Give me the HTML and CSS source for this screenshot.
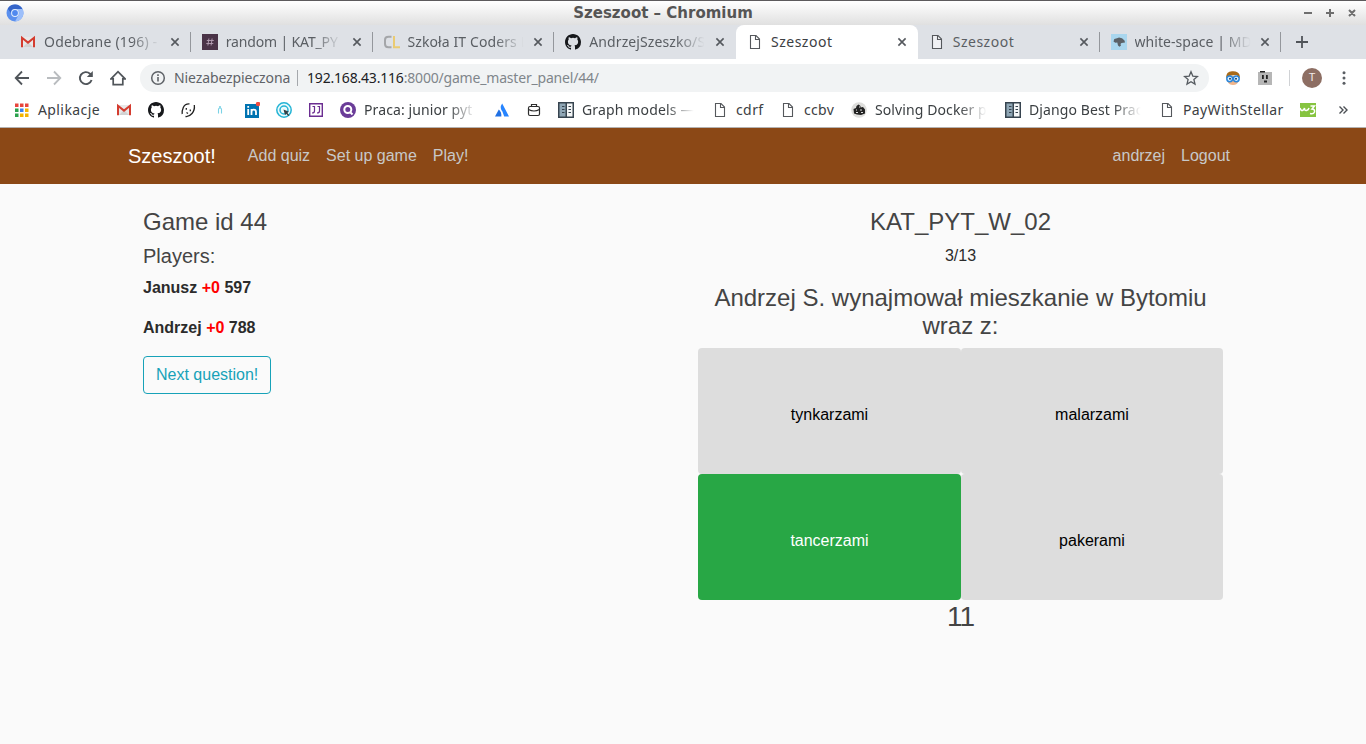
FILE: index.html
```html
<!DOCTYPE html>
<html lang="pl">
<head>
<meta charset="utf-8">
<title>Szeszoot</title>
<link rel="stylesheet" href="styles.css">
</head>
<body>
<svg class="defs" width="0" height="0">
  <symbol id="gmail" viewBox="0 0 16 16"><path d="M2 3h12v10H2z" fill="#e8e8e8"/><path d="M3 13l5-5 5 5z" fill="#d2d2d2"/><path d="M2 13.2V3.8l6 4.8 6-4.8v9.4" fill="none" stroke="#d43c2f" stroke-width="2"/></symbol>
  <symbol id="github" viewBox="0 0 16 16"><path fill="#17191c" d="M8 0C3.58 0 0 3.58 0 8c0 3.54 2.29 6.53 5.47 7.59.4.07.55-.17.55-.38 0-.19-.01-.82-.01-1.49-2.01.37-2.53-.49-2.69-.94-.09-.23-.48-.94-.82-1.13-.28-.15-.68-.52-.01-.53.63-.01 1.08.58 1.23.82.72 1.21 1.87.87 2.33.66.07-.52.28-.87.51-1.07-1.78-.2-3.64-.89-3.64-3.95 0-.87.31-1.59.82-2.15-.08-.2-.36-1.02.08-2.12 0 0 .67-.21 2.2.82a7.6 7.6 0 0 1 4 0c1.53-1.04 2.2-.82 2.2-.82.44 1.1.16 1.92.08 2.12.51.56.82 1.27.82 2.15 0 3.07-1.87 3.75-3.65 3.95.29.25.54.73.54 1.48 0 1.07-.01 1.93-.01 2.2 0 .21.15.46.55.38A8.01 8.01 0 0 0 16 8c0-4.42-3.58-8-8-8z"/></symbol>
  <symbol id="page" viewBox="0 0 16 16"><path d="M3.500 1.500h5.500l3.500 3.500v9.500h-9z" fill="#fff" fill-opacity=".5" stroke="#55585c" stroke-width="1.100"/><path d="M8.500 1.600v3.900h4" fill="none" stroke="#55585c" stroke-width="1.100"/></symbol>
  <symbol id="close" viewBox="0 0 10 10"><path d="M1.400 1.400l7.200 7.200M8.600 1.400L1.400 8.600" stroke="#55595e" stroke-width="1.600"/></symbol>
  <symbol id="book" viewBox="0 0 16 16"><path d="M0 0h16v16H0z" fill="#37444f"/><path d="M1.500 1.500H7.500v13H1.500z" fill="#8fa6b5"/><path d="M9 1.500h5.500v13H9z" fill="#f4f6f7"/><path d="M4 4.500h2.500M4 7.500h2.500M4 10.500h2.500M10.500 4.500H13M10.500 7.500H13M10.500 10.500H13" stroke="#37444f" stroke-width="1.200"/></symbol>
</svg>

<header class="window">
  <div class="titlebar">
    <svg class="app-icon" width="18" height="18" viewBox="0 0 18 18"><circle cx="9" cy="9" r="8.500" fill="#5b90ee"/><path d="M1.700 4.700A8.500 8.500 0 0 1 16.500 5H9a4 4 0 0 0-4 4z" fill="#3565c9"/><path d="M16.500 5A8.500 8.500 0 0 1 9 17.500L12.600 11A4 4 0 0 0 9 5z" fill="#9dbffa"/><circle cx="9" cy="9" r="3.900" fill="#e4eefc"/><circle cx="9" cy="9" r="2.900" fill="#5089ef"/></svg>
    <span class="title">Szeszoot – Chromium</span>
    <svg class="win-buttons" width="56" height="12" viewBox="0 0 56 12"><path d="M2 6h8M24 6h8M28 2v8M47 3l6 6M53 3l-6 6" stroke="#6e6e6e" stroke-width="2"/></svg>
  </div>

  <div class="tabs">
    <div class="tab"><svg class="ico"><use href="#gmail"/></svg><span class="tab-label fade t-mail">Odebrane (196) - a</span><svg class="close"><use href="#close"/></svg></div>
    <div class="tab"><svg class="ico" viewBox="0 0 16 16"><path d="M0 0h16v16H0z" fill="#4b3448"/><path d="M6.900 4.500l-1 7M10.100 4.500l-1 7M4.800 6.500h7M4.300 9.500h7" stroke="#b7a0b4" stroke-width=".9"/></svg><span class="tab-label fade t-random">random | KAT_PY</span><svg class="close"><use href="#close"/></svg></div>
    <div class="tab"><svg class="ico" viewBox="0 0 16 16"><path d="M7.500 2.800H4.500Q1 2.800 1 6v4q0 3.200 3.500 3.200h3" fill="none" stroke="#a4a6a9" stroke-width="2"/><path d="M10 2v11.200h6" fill="none" stroke="#eacb72" stroke-width="2"/></svg><span class="tab-label fade t-szkola">Szkoła IT Coders L</span><svg class="close"><use href="#close"/></svg></div>
    <div class="tab before-active"><svg class="ico"><use href="#github"/></svg><span class="tab-label fade t-andrzej">AndrzejSzeszko/S</span><svg class="close"><use href="#close"/></svg></div>
    <div class="tab active"><svg class="ico"><use href="#page"/></svg><span class="tab-label t-szeszoot">Szeszoot</span><svg class="close"><use href="#close"/></svg></div>
    <div class="tab"><svg class="ico"><use href="#page"/></svg><span class="tab-label t-szeszoot">Szeszoot</span><svg class="close"><use href="#close"/></svg></div>
    <div class="tab"><svg class="ico" viewBox="0 0 16 16"><path d="M0 0h16v16H0z" fill="#a9d6ee"/><path d="M2.500 7.500l.8-2.500L6 4.300 8 3.500l3 .8 2.500 2.200.5 2-3.500.5-1 1 .5 1.500-1.500 1.300L7 11.500 6.300 8.500l-2 .3z" fill="#5b6167"/></svg><span class="tab-label fade t-white">white-space | MD</span><svg class="close"><use href="#close"/></svg></div>
    <svg class="new-tab" viewBox="0 0 12 12"><path d="M6 0v12M0 6h12" stroke="#505459" stroke-width="1.800"/></svg>
  </div>

  <div class="toolbar">
    <svg class="nav" viewBox="0 0 16 16"><path d="M15 8H2M8 1.500L1.700 8 8 14.500" fill="none" stroke="#50555a" stroke-width="1.800"/></svg>
    <svg class="nav" viewBox="0 0 16 16"><path d="M1 8h13M8 1.500L14.300 8 8 14.500" fill="none" stroke="#b9bcbf" stroke-width="1.800"/></svg>
    <svg class="nav" viewBox="0 0 16 16"><path d="M13.600 10A6 6 0 1 1 12 3.700L13.600 5.500" fill="none" stroke="#50555a" stroke-width="1.900"/><path d="M14.800 1v6H8.800z" fill="#50555a"/></svg>
    <svg class="nav" viewBox="0 0 16 16"><path d="M1 8.800L8 1.600l7 7.200h-2.200v5.800H3.200V8.800z" fill="none" stroke="#50555a" stroke-width="1.700"/></svg>
    <div class="omnibox">
      <svg class="info" viewBox="0 0 16 16"><circle cx="8" cy="8" r="6.300" fill="none" stroke="#5f6368" stroke-width="1.500"/><path d="M8 7v4.500M8 4.300v1.600" stroke="#5f6368" stroke-width="1.600"/></svg>
      <span class="insecure">Niezabezpieczona</span>
      <span class="url"><span class="host">192.168.43.116</span><span class="path">:8000/game_master_panel/44/</span></span>
      <svg class="star" viewBox="0 0 16 16"><path d="M8 1.800l1.800 4.300 4.700.4-3.600 3 1.100 4.600L8 11.700l-4 2.400 1.100-4.600-3.600-3 4.700-.4z" fill="none" stroke="#565b60" stroke-width="1.300"/></svg>
    </div>
    <svg class="ext" viewBox="0 0 16 16"><path d="M2.500 6h11v5q-1 4-5.500 4t-5.500-4z" fill="#f1b58a"/><path d="M1 8q0-6.500 6-6.800 6-.5 7.500 3.500L15 8l-3.500-3L6 5.500z" fill="#a96a17"/><circle cx="4.700" cy="8.800" r="2.900" fill="#dff2ff" stroke="#2b86da" stroke-width="1.500"/><circle cx="11.300" cy="8.800" r="2.900" fill="#dff2ff" stroke="#2b86da" stroke-width="1.500"/><circle cx="5" cy="8.800" r="1" fill="#17426b"/><circle cx="11" cy="8.800" r="1" fill="#17426b"/></svg>
    <svg class="ext" viewBox="0 0 16 16"><path d="M1 2h14v13H1z" fill="#b6b6b6"/><path d="M3 1h5v1.500H3z" fill="#222"/><path d="M5 5h1.800v4H5zM9 5h1.800v4H9zM7 10.500h3v2H7z" fill="#222"/></svg>
    <span class="divider"></span>
    <div class="avatar">T</div>
    <svg class="menu" viewBox="0 0 4 16"><g fill="#5a5e63"><circle cx="2" cy="2.800" r="1.500"/><circle cx="2" cy="8" r="1.500"/><circle cx="2" cy="13.200" r="1.500"/></g></svg>
  </div>

  <div class="bookmarks">
    <div class="bm"><svg class="ico" viewBox="0 0 16 16"><path d="M1 1.500h3.500V5H1zM6 1.500h3.500V5H6zM11 1.500h3.500V5H11z" fill="#e8453c"/><path d="M1 6.500h3.500V10H1zM1 11.500h3.500V15H1z" fill="#2ba24c"/><path d="M6 6.500h3.500V10H6z" fill="#3b82ee"/><path d="M11 6.500h3.500V10H11zM6 11.500h3.500V15H6zM11 11.500h3.500V15H11z" fill="#f4b400"/></svg><span class="bm-label b-apps">Aplikacje</span></div>
    <div class="bm"><svg class="ico"><use href="#gmail"/></svg></div>
    <div class="bm"><svg class="ico"><use href="#github"/></svg></div>
    <div class="bm"><svg class="ico" viewBox="0 0 16 16"><path d="M9.500 1.800Q5 1.500 3.300 5.500T2.200 12M14.300 3Q15 8 12 11.500T5.500 14.500" fill="none" stroke="#222" stroke-width="1.300"/><path d="M6.300 6v1.800M10.300 7.500v1.800M6.500 10.500l1.500 1" stroke="#222" stroke-width="1.300"/></svg></div>
    <div class="bm"><svg class="ico" viewBox="0 0 16 16"><path d="M6.500 11.500V7.500q0-1.500 1.500-1.500t1.500 1.500v4" fill="none" stroke="#7bd3e6" stroke-width="1.100"/><circle cx="8" cy="5" r="1.100" fill="#7bd3e6"/></svg></div>
    <div class="bm"><svg class="ico" viewBox="0 0 16 16"><path d="M1 2h14v14H1z" fill="#0073b1"/><path d="M4.200 7v6M4.200 4v1.700M7.500 13V7M7.500 10q0-2.300 2.200-2.300T12 10v3" fill="none" stroke="#fff" stroke-width="1.800"/><circle cx="14" cy="2" r="2.200" fill="#f04a3e"/></svg></div>
    <div class="bm"><svg class="ico" viewBox="0 0 16 16"><circle cx="8" cy="8" r="7.200" fill="#eafafc" stroke="#24b4d5" stroke-width="1.500"/><circle cx="8" cy="8" r="4" fill="none" stroke="#24b4d5" stroke-width="1.500"/><path d="M7.500 7.500l5.500 2.200-1.800 1 2.200 2.500-1 .9-2.300-2.300-1 1.500z" fill="#333f45"/></svg></div>
    <div class="bm"><svg class="ico" viewBox="0 0 16 16"><path d="M1.700 1.700h12.600v12.600H1.700z" fill="#fff" stroke="#6b2d91" stroke-width="1.400"/><path d="M4.500 4.500h2V9q0 2-2.500 2M9.500 4.500h2V9q0 2-2.500 2" fill="none" stroke="#6b2d91" stroke-width="1.200"/></svg></div>
    <div class="bm"><svg class="ico" viewBox="0 0 16 16"><circle cx="8" cy="8" r="8" fill="#6a3c98"/><circle cx="7.800" cy="7.500" r="3.500" fill="none" stroke="#fff" stroke-width="2"/><path d="M10.500 10.500l2 2" stroke="#fff" stroke-width="2"/></svg><span class="bm-label wide fade b-praca">Praca: junior pyt</span></div>
    <div class="bm"><svg class="ico" viewBox="0 0 16 16"><path d="M4.800 7.500q3 2.500 2.500 7H1z" fill="#2070e4"/><path d="M8.200 1.500q-3 4 .2 8l1.800 5H15z" fill="#2684ff"/></svg></div>
    <div class="bm"><svg class="ico" viewBox="0 0 16 16"><rect x="2.500" y="4.500" width="11" height="9" rx="1.500" fill="#fff" stroke="#2d2d2d" stroke-width="1.200"/><path d="M5.500 4.500V2.500h5v2M2.500 7.500q5.500 3 11 0" fill="none" stroke="#2d2d2d" stroke-width="1.200"/></svg></div>
    <div class="bm"><svg class="ico"><use href="#book"/></svg><span class="bm-label wide fade b-graph">Graph models —</span></div>
    <div class="bm"><svg class="ico"><use href="#page"/></svg><span class="bm-label b-cdrf">cdrf</span></div>
    <div class="bm"><svg class="ico"><use href="#page"/></svg><span class="bm-label b-ccbv">ccbv</span></div>
    <div class="bm"><svg class="ico" viewBox="0 0 16 16"><circle cx="8" cy="8" r="7.800" fill="#dededc"/><path d="M2.500 7l2.500-1 .5-2 2-1.500 2 1.500v1.500L12 5l2 2.500v4l-4 1.500-4-.5-3-1z" fill="#222"/><path d="M5 8h1M8 5h1M9 8h2M5 10.500h2M10 10.500h2" stroke="#ddd"/></svg><span class="bm-label wide fade b-solving">Solving Docker p</span></div>
    <div class="bm"><svg class="ico"><use href="#book"/></svg><span class="bm-label wide fade b-django">Django Best Prac</span></div>
    <div class="bm"><svg class="ico"><use href="#page"/></svg><span class="bm-label b-pay">PayWithStellar</span></div>
    <div class="bm"><svg class="ico" viewBox="0 0 16 16"><path d="M0 1h16v14H0z" fill="#86c440"/><path d="M0 6q1 3 2.500 2.500T4.500 6q0 3 2 2.500T9 6M10.500 4h4L12 7q3 0 2.500 3-1 2.500-4.500 1.500" fill="none" stroke="#fff" stroke-width="1.500"/></svg></div>
    <svg class="more" viewBox="0 0 10 10"><path d="M1.500 1.500L5 5 1.500 8.500M5.500 1.500L9 5 5.500 8.500" fill="none" stroke="#4b4f54" stroke-width="1.400"/></svg>
  </div>
</header>

<nav class="navbar">
  <a class="brand">Szeszoot!</a>
  <a class="link">Add quiz</a>
  <a class="link">Set up game</a>
  <a class="link">Play!</a>
  <a class="link push">andrzej</a>
  <a class="link">Logout</a>
</nav>

<main class="content">
  <section class="players">
    <h4>Game id 44</h4>
    <h5>Players:</h5>
    <p class="player">Janusz <span class="gain">+0</span> 597</p>
    <p class="player">Andrzej <span class="gain">+0</span> 788</p>
    <button class="next">Next question!</button>
  </section>
  <section class="question">
    <h4>KAT_PYT_W_02</h4>
    <p class="counter">3/13</p>
    <h4>Andrzej S. wynajmował mieszkanie w Bytomiu wraz z:</h4>
    <div class="answers">
      <button class="answer">tynkarzami</button>
      <button class="answer">malarzami</button>
      <button class="answer correct">tancerzami</button>
      <button class="answer">pakerami</button>
    </div>
    <h3>11</h3>
  </section>
</main>
</body>
</html>
```
FILE: styles.css
```css
* { box-sizing: border-box; }
body {
  margin: 0;
  height: 744px;
  overflow: hidden;
  background: #fafafa;
  color: #2b2b2b;
  font: 16px/24px "Liberation Sans", Arial, sans-serif;
}
svg { display: block; flex: none; }
.defs { position: absolute; }
.window { font-family: "Noto Sans", "Open Sans", sans-serif; white-space: nowrap; }
.ico { width: 16px; height: 16px; }

/* Window title */
.titlebar {
  display: flex;
  align-items: center;
  justify-content: space-between;
  height: 25px;
  padding: 0 8px 0 6px;
  border-top: 1px solid #5c5a5c;
  background: linear-gradient(#fff, #e0e0e0);
}
.title {
  color: #555;
  font: bold 15px/24px "DejaVu Sans", sans-serif;
}

/* Tab strip */
.tabs {
  display: flex;
  align-items: center;
  height: 34px;
  padding-left: 9px;
  background: #dee1e6;
}
.tab {
  display: flex;
  align-items: center;
  width: 181.750px;
  height: 20px;
  padding: 0 10px 0 11px;
  border-right: 1px solid #94979c;
  color: #5a5e63;
  font-size: 14px;
}
.tab-label { width: 118px; margin-left: 8px; }
.t-mail { letter-spacing: .2px; }
.t-random { letter-spacing: -.15px; }
.t-szkola { letter-spacing: .1px; }
.t-andrzej { letter-spacing: .1px; }
.t-szeszoot { letter-spacing: .5px; }
.t-white { letter-spacing: .05px; }
.fade {
  -webkit-mask-image: linear-gradient(90deg, #000 74%, transparent 98%);
  mask-image: linear-gradient(90deg, #000 74%, transparent 98%);
}
.close { width: 10px; height: 10px; margin-left: auto; }
.before-active { border-color: transparent; }
.active {
  height: 34px;
  padding-right: 11px;
  background: #fff;
  border: 0;
  border-radius: 8px 8px 0 0;
  color: #3c4043;
}
.new-tab { width: 12px; height: 12px; margin-left: 15px; }

/* Address bar */
.toolbar {
  display: flex;
  align-items: center;
  height: 37px;
  padding-left: 14px;
  background: #fff;
}
.nav { width: 16px; height: 16px; margin-right: 16px; }
.omnibox {
  display: flex;
  align-items: center;
  width: 1069px;
  height: 28px;
  margin-left: -2px;
  padding: 0 10px;
  border-radius: 14px;
  background: #f1f3f4;
  font-size: 14px;
}
.info { width: 16px; height: 16px; }
.insecure {
  width: 124px;
  height: 16px;
  margin-left: 8px;
  border-right: 1px solid #a5a8ac;
  color: #5f6368;
  line-height: 16px;
  letter-spacing: -.1px;
}
.url { margin-left: 9px; color: #80868b; letter-spacing: -.19px; }
.host { color: #202124; }
.star { width: 16px; height: 16px; margin-left: auto; }
.ext { width: 16px; height: 16px; margin-left: 16px; }
.divider { width: 1px; height: 16px; margin-left: 16px; background: #d0d2d5; }
.avatar {
  width: 20px;
  height: 20px;
  margin-left: 12px;
  border-radius: 50%;
  background: #8d6e63;
  color: #f3ebe8;
  font: 11px/20px Roboto, sans-serif;
  text-align: center;
}
.menu { width: 4px; height: 16px; margin-left: 20px; }

/* Bookmarks bar */
.bookmarks {
  display: flex;
  align-items: center;
  gap: 16px;
  height: 32px;
  padding: 0 18px 3px 14px;
  background: #fff;
  border-bottom: 1px solid #b4b2b2;
  color: #3c4043;
  font-size: 14px;
}
.bm { display: flex; align-items: center; gap: 8px; }
.b-apps { width: 62px; letter-spacing: .4px; }
.wide { width: 114px; }
.b-praca, .b-solving, .b-django { letter-spacing: .1px; }
.b-graph { letter-spacing: .15px; }
.b-cdrf { width: 28px; letter-spacing: .4px; }
.b-ccbv { width: 31px; letter-spacing: .3px; }
.b-pay { width: 101px; letter-spacing: .38px; }
.more { width: 10px; height: 10px; margin-left: auto; }

/* Site navigation */
.navbar {
  display: flex;
  align-items: center;
  height: 56px;
  padding: 0 128px;
  background: #8b4816;
  color: #c8c8c8;
}
.brand { margin-right: 24px; color: #fff; font-size: 20px; }
.link { padding: 0 8px; }
.push { margin-left: auto; }

/* Game panel */
.content {
  display: grid;
  grid-template-columns: 555px 525px;
  padding: 24px 143px;
}
h3, h4, h5 { margin: 0 0 8px; color: #444; font-weight: 400; line-height: 1.2; }
h3 { font-size: 28px; letter-spacing: -1px; }
h4 { font-size: 24px; line-height: 28px; }
h5 { font-size: 20px; line-height: 24px; }
.player { margin: 0 0 16px; font-weight: 700; }
.gain { color: #f00; }
.next {
  height: 38px;
  padding: 0 12px;
  border: 1px solid #17a2b8;
  border-radius: 4px;
  background: transparent;
  color: #17a2b8;
  font: inherit;
}
.question { text-align: center; }
.counter { margin: 0 0 16px; }
.answers { display: grid; grid-template-columns: 263px 262px; grid-auto-rows: 126px; }
.answer {
  padding: 14px 12px 6px;
  border: 0;
  border-radius: 4px;
  background: #ddd;
  color: #000;
  font: inherit;
}
.correct { background: #28a745; color: #fff; }
```
